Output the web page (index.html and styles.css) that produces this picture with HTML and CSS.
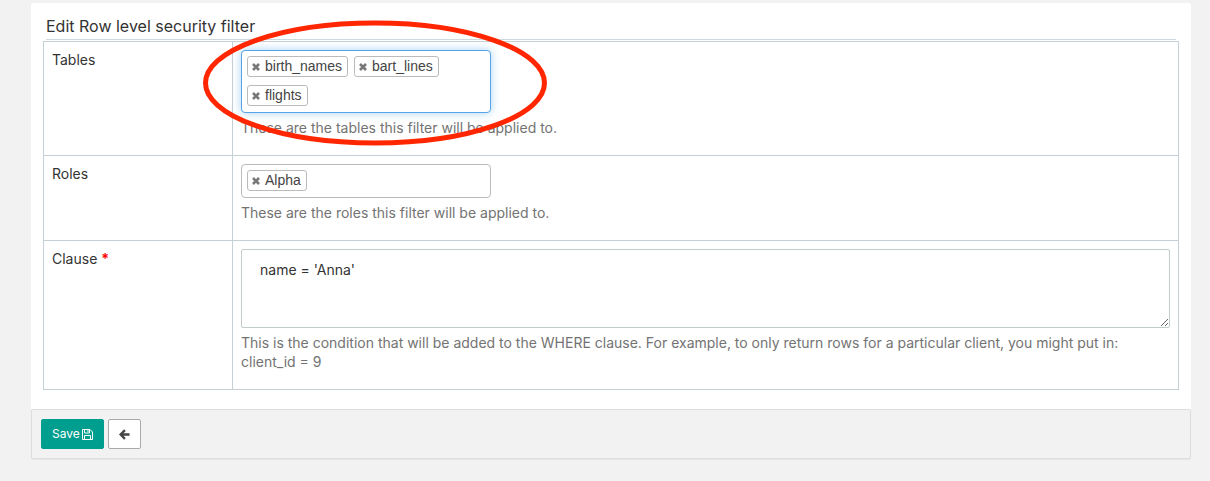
FILE: index.html
```html
<!DOCTYPE html>
<html lang="en">
<head>
<meta charset="utf-8">
<meta name="viewport" content="width=device-width, initial-scale=1">
<title>Edit Row level security filter</title>
<link rel="stylesheet" href="styles.css">
</head>
<body>
<svg class="defs" aria-hidden="true">
  <symbol id="x" viewBox="0 0 8 8"><path d="M1 1L7 7M7 1L1 7" fill="none" stroke="currentColor" stroke-width="2.6"/></symbol>
</svg>
<form class="panel">
  <div class="panel-body">
    <h1 class="title">Edit Row level security filter</h1>
    <table class="fields">
      <tbody>
        <tr>
          <th scope="row"><label for="tables">Tables</label></th>
          <td class="annotated">
            <div class="picker focused">
              <span class="chip"><button type="button" aria-label="Remove birth_names"><svg><use href="#x"/></svg></button>birth_names</span>
              <span class="chip"><button type="button" aria-label="Remove bart_lines"><svg><use href="#x"/></svg></button>bart_lines</span>
              <span class="chip"><button type="button" aria-label="Remove flights"><svg><use href="#x"/></svg></button>flights</span>
              <input id="tables" type="text" autocomplete="off">
            </div>
            <p class="help">These are the tables this filter will be applied to.</p>
            <svg class="ring" viewBox="0 0 346 128" aria-hidden="true"><ellipse cx="173" cy="64" rx="169.5" ry="60" fill="none" stroke="#ff2600" stroke-width="5"/></svg>
          </td>
        </tr>
        <tr>
          <th scope="row"><label for="roles">Roles</label></th>
          <td>
            <div class="picker">
              <span class="chip"><button type="button" aria-label="Remove Alpha"><svg><use href="#x"/></svg></button>Alpha</span>
              <input id="roles" type="text" autocomplete="off">
            </div>
            <p class="help">These are the roles this filter will be applied to.</p>
          </td>
        </tr>
        <tr>
          <th scope="row"><label for="clause">Clause <strong class="required">*</strong></label></th>
          <td>
            <textarea class="clause" id="clause" required>name = 'Anna'</textarea>
            <p class="help">This is the condition that will be added to the WHERE clause. For example, to only return rows for a particular client, you might put in: client_id = 9</p>
          </td>
        </tr>
      </tbody>
    </table>
  </div>
  <div class="actions">
    <button class="btn save" type="submit">Save
      <svg width="11" height="11" viewBox="0 0 11 11" fill="none" stroke="currentColor"><path d="M.5 .5H8L10.500 3V10.500H.5ZM2.500 .5V4H7.500V.5M2.500 10.500V6.500H8.500V10.500M6 1V3"/></svg>
    </button>
    <button class="btn back" type="button" aria-label="Back">
      <svg width="11" height="11" viewBox="0 0 12 12" fill="none" stroke="currentColor" stroke-width="2.500"><path d="M11.500 6H2M6.500 1.200L1.700 6L6.500 10.800"/></svg>
    </button>
  </div>
</form>
</body>
</html>
```
FILE: styles.css
```css
* { box-sizing: border-box; }
body {
  margin: 0;
  padding: 3px 19px 21px 31px;
  background: #f2f2f2;
  color: #333;
  font: 14px/19px Inter, "Liberation Sans", sans-serif;
}
.defs { display: none; }
.panel-body { padding: 12px 12px 19px; border-radius: 2px 2px 0 0; background: #fff; }
.title {
  margin: 0 3px 1px;
  padding-bottom: 1px;
  border-bottom: 1px solid #cfd8dc;
  font-size: 16px;
  font-weight: 400;
  line-height: 23px;
}
.fields { width: 100%; border-collapse: collapse; }
.fields th, .fields td {
  padding: 8px;
  border: 1px solid #c5d0d5;
  text-align: left;
  vertical-align: top;
}
.fields th { width: 189px; font-weight: 400; }
.fields td { padding-bottom: 18px; }
.annotated { position: relative; }
.required { color: #f00; }
.picker {
  display: flex;
  flex-wrap: wrap;
  align-content: flex-start;
  gap: 8px 6px;
  width: 250px;
  min-height: 34px;
  padding: 5px;
  border: 1px solid #bbb;
  border-radius: 4px;
  background: #fff;
}
.picker.focused {
  min-height: 63px;
  border-color: #56a3e8;
  box-shadow: 0 0 8px rgba(82, 168, 236, .5);
}
.picker input {
  flex: 1;
  min-width: 10px;
  width: 10px;
  height: 21px;
  padding: 0;
  border: 0;
  outline: 0;
  background: transparent;
  font: inherit;
}
.chip {
  display: flex;
  align-items: center;
  gap: 5px;
  height: 21px;
  padding: 0 5px 0 4px;
  border: 1px solid #bbb;
  border-radius: 3px;
  color: #444;
  font: 14px/19px "Liberation Sans", Arial, sans-serif;
}
.chip button { display: flex; padding: 0; border: 0; background: none; color: #777; }
.chip svg { width: 8px; height: 8px; }
.help { margin: 5px 0 0; color: #737373; }
.ring {
  position: absolute;
  top: -23px;
  left: -31px;
  width: 346px;
  height: 128px;
  pointer-events: none;
}
.clause {
  display: block;
  width: 100%;
  height: 79px;
  padding: 10px 18px;
  border: 1px solid #c2cdca;
  border-radius: 2px;
  color: #333;
  font: 14px/19px Inter, "Liberation Sans", sans-serif;
}
.actions {
  display: flex;
  gap: 4px;
  padding: 9px;
  border: 1px solid #ddd;
  border-radius: 2px;
  box-shadow: 0 1px 1px rgba(0, 0, 0, .05);
}
.btn {
  display: flex;
  align-items: center;
  justify-content: center;
  gap: 2px;
  height: 30px;
  padding: 0 10px;
  border: 1px solid #009e8e;
  border-radius: 2px;
  font: 12px/18px Inter, "Liberation Sans", sans-serif;
}
.save { background: #009e8e; color: #fff; }
.back { border-color: #aaa; background: #fff; color: #444; }
```
